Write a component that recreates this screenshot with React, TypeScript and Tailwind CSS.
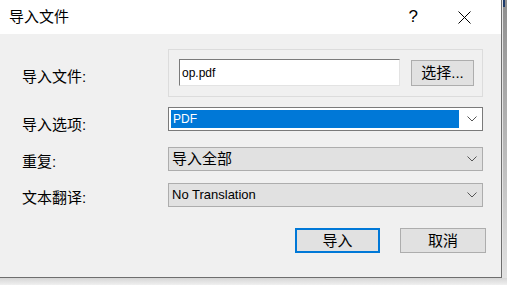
import React from 'react';

const font = "font-['Liberation_Sans','Noto_Sans_CJK_SC',sans-serif]";

function Chevron() {
  return (
    <svg width="10" height="6" viewBox="0 0 10 6" className="block">
      <polyline points="0.5,0.5 5,5 9.5,0.5" fill="none" stroke="#555" strokeWidth="1" />
    </svg>
  );
}

function Label({ text, top }: { text: string; top: string }) {
  return <div className={`w-[146px] shrink-0 text-[15px] leading-[20px] text-black ${top}`}>{text}</div>;
}

function Combo({ value }: { value: string }) {
  return (
    <div className="w-[315px] h-[24px] flex items-center border border-[#adadad] bg-[#e1e1e1]">
      <span className="flex-1 pl-[3px] text-[13px] leading-[20px] text-black">{value}</span>
      <div className="w-[23px] flex justify-center pl-[2px]">
        <Chevron />
      </div>
    </div>
  );
}

export default function App() {
  return (
    <div className={`w-[507px] h-[285px] flex flex-col overflow-hidden bg-[#efefef] ${font}`}>
      <div className="flex">
        {/* Dialog */}
        <div className="w-[502px] h-[278px] shrink-0 flex flex-col border-r border-b border-[#6e6e6e] bg-[#f0f0f0]">
          {/* Title bar */}
          <div className="h-[34px] shrink-0 bg-white flex items-center">
            <span className="ml-[9px] text-[15px] leading-[20px] text-black">导入文件</span>
            <span className="ml-auto mr-[40px] text-[17px] leading-[20px] text-black">?</span>
            <svg width="13" height="13" viewBox="0 0 13 13" className="mr-[30px] mt-[1px]">
              <line x1="0.5" y1="0.5" x2="12.5" y2="12.5" stroke="#000" strokeWidth="1" />
              <line x1="12.5" y1="0.5" x2="0.5" y2="12.5" stroke="#000" strokeWidth="1" />
            </svg>
          </div>

          {/* Body */}
          <div className="flex-1 flex flex-col pt-[15px] pl-[22px]">
            {/* File row */}
            <div className="flex items-start h-[48px]">
              <Label text="导入文件:" top="mt-[18px]" />
              <div className="w-[315px] h-[48px] border border-[#dcdcdc] flex items-start pt-[9px] pl-[10px]">
                <div className="w-[221px] h-[27px] flex items-center bg-white border-t border-l border-[#7a7a7a] border-r border-b border-r-[#e3e3e3] border-b-[#e3e3e3]">
                  <span className="pl-[2px] text-[12px] leading-[20px] text-black">op.pdf</span>
                </div>
                <button className="ml-[11px] mt-[1px] w-[63px] h-[26px] flex items-center justify-center border border-[#adadad] bg-[#e1e1e1] text-[15px] leading-[20px] text-black">
                  选择...
                </button>
              </div>
            </div>

            {/* Import option */}
            <div className="flex items-start h-[24px] mt-[10px]">
              <Label text="导入选项:" top="mt-[8px]" />
              <div className="w-[315px] h-[24px] flex items-stretch border border-[#7a7a7a] bg-white p-[2px] pr-0">
                <div className="flex-1 flex items-center bg-[#0078d7] pl-[2px]">
                  <span className="text-[12px] leading-[18px] text-white">PDF</span>
                </div>
                <div className="w-[23px] flex items-center justify-center pl-[2px]">
                  <Chevron />
                </div>
              </div>
            </div>

            {/* Duplicate */}
            <div className="flex items-start h-[24px] mt-[16px]">
              <Label text="重复:" top="mt-[5px]" />
              <div className="w-[315px] h-[24px] flex items-center border border-[#adadad] bg-[#e1e1e1]">
                <span className="flex-1 pl-[3px] text-[15px] leading-[20px] text-black">导入全部</span>
                <div className="w-[23px] flex justify-center pl-[2px]">
                  <Chevron />
                </div>
              </div>
            </div>

            {/* Translation */}
            <div className="flex items-start h-[24px] mt-[12px]">
              <Label text="文本翻译:" top="mt-[5px]" />
              <Combo value="No Translation" />
            </div>

            {/* Buttons */}
            <div className="flex self-end mr-[15px] mt-[21px] gap-[20px]">
              <button className="w-[85px] h-[25px] flex items-center justify-center border-2 border-[#0078d7] bg-[#e1e1e1] text-[15px] leading-[20px] text-black">
                导入
              </button>
              <button className="w-[86px] h-[25px] flex items-center justify-center border border-[#adadad] bg-[#e1e1e1] text-[15px] leading-[20px] text-black">
                取消
              </button>
            </div>
          </div>
        </div>

        {/* Right shadow / background window */}
        <div className="flex-1 flex">
          <div className="w-[1px] bg-[#e4e4e4]" />
          <div className="flex-1 flex flex-col bg-gradient-to-b from-[#8e8e8e] to-[#e2e2e2]">
            <div className="h-[7px] w-[2px] bg-[#1d3b6b]" />
          </div>
        </div>
      </div>

      {/* Bottom shadow */}
      <div className="flex-1 bg-gradient-to-b from-[#d6d6d6] to-[#f0f0f0]" />
    </div>
  );
}
